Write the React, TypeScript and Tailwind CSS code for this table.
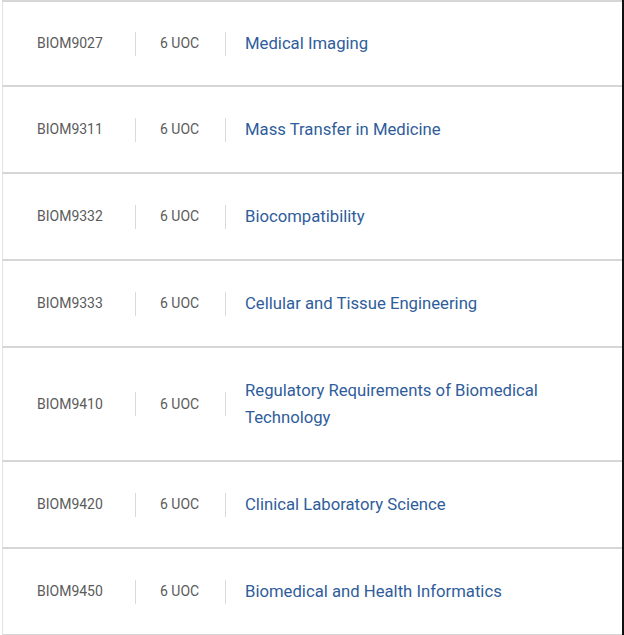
const courses = [
  { code: 'BIOM9027', uoc: '6 UOC', title: 'Medical Imaging' },
  { code: 'BIOM9311', uoc: '6 UOC', title: 'Mass Transfer in Medicine' },
  { code: 'BIOM9332', uoc: '6 UOC', title: 'Biocompatibility' },
  { code: 'BIOM9333', uoc: '6 UOC', title: 'Cellular and Tissue Engineering' },
  { code: 'BIOM9410', uoc: '6 UOC', title: 'Regulatory Requirements of Biomedical Technology' },
  { code: 'BIOM9420', uoc: '6 UOC', title: 'Clinical Laboratory Science' },
  { code: 'BIOM9450', uoc: '6 UOC', title: 'Biomedical and Health Informatics' },
];

export default function App() {
  return (
    <div className="w-[624px] h-[635px] overflow-hidden bg-white flex font-['Roboto',sans-serif]">
      <div className="flex-1 pl-[2px]">
        <div className="border-t-2 border-[#d6d6d6]">
          {courses.map((c, i) => (
            <div
              key={c.code}
              className={`flex items-center border-l border-b-2 border-l-[#e2e2e2] border-b-[#d6d6d6] ${
                i === 0 ? 'py-[28px]' : 'py-[29px]'
              }`}
            >
              <div className="w-[132px] pl-[34px] text-[14px] leading-[27px] text-[#5b5b5b]">
                {c.code}
              </div>
              <div className="w-px h-[24px] bg-[#dadada]" />
              <div className="w-[89px] pl-[24px] text-[14px] leading-[27px] text-[#5b5b5b]">
                {c.uoc}
              </div>
              <div className="w-px h-[24px] bg-[#dadada]" />
              <div className="flex-1 pl-[19px] pr-[60px] text-[16.7px] leading-[27px] text-[#2f5d9b]">
                {c.title}
              </div>
            </div>
          ))}
        </div>
      </div>
      <div className="w-[2px] bg-[#111]" />
    </div>
  );
}
